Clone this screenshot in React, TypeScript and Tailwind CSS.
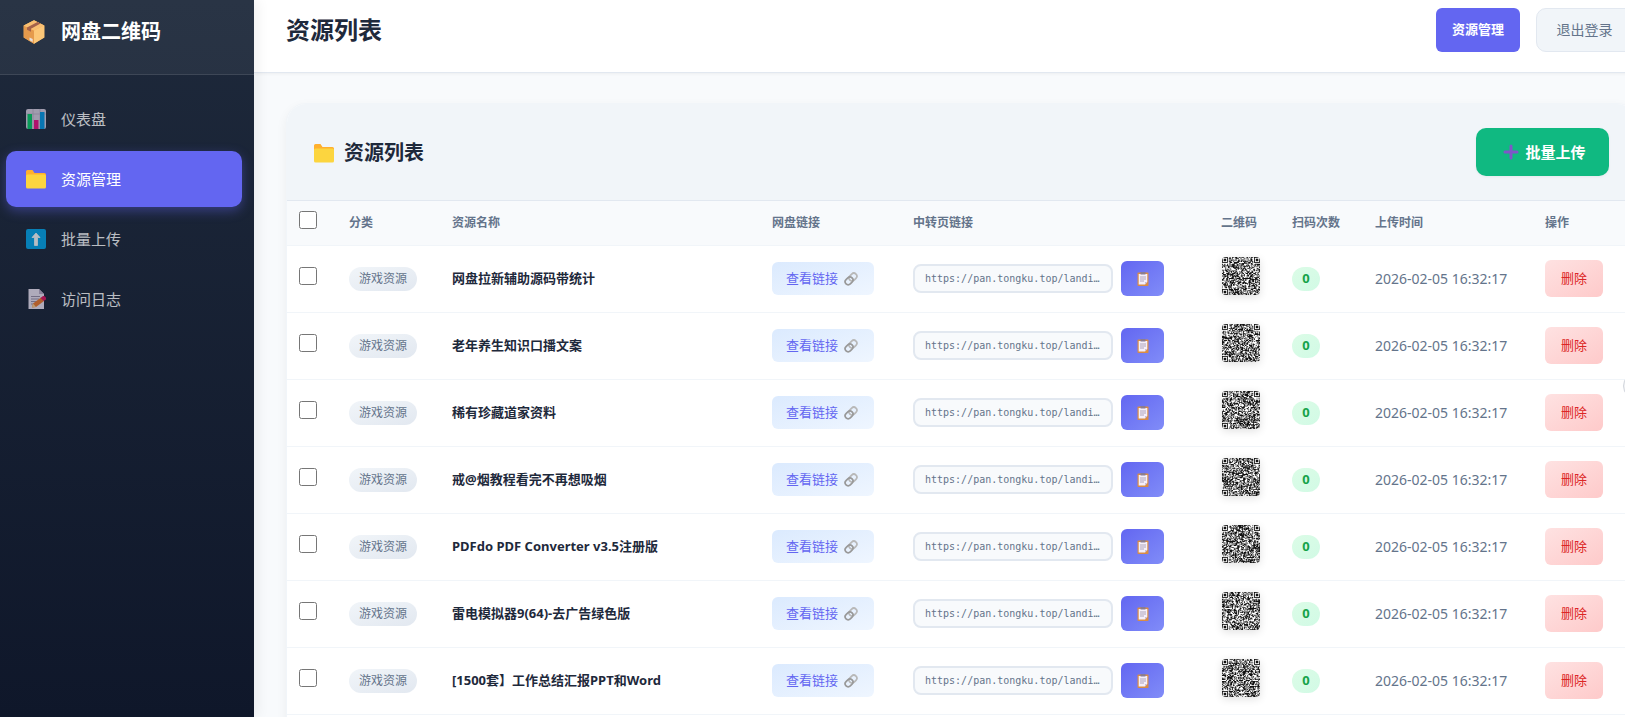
import type { ReactNode } from "react";

const navItems = [
  { label: "仪表盘", icon: <ChartIcon />, active: false },
  { label: "资源管理", icon: <FolderIcon />, active: true },
  { label: "批量上传", icon: <UploadIcon />, active: false },
  { label: "访问日志", icon: <MemoIcon />, active: false },
];

const resources = [
  "网盘拉新辅助源码带统计",
  "老年养生知识口播文案",
  "稀有珍藏道家资料",
  "戒@烟教程看完不再想吸烟",
  "PDFdo PDF Converter v3.5注册版",
  "雷电模拟器9(64)-去广告绿色版",
  "[1500套】工作总结汇报PPT和Word",
];

function BoxIcon() {
  return (
    <svg viewBox="0 0 22 24" className="w-[22px] h-6" aria-hidden="true">
      <path d="M11 0.3 21.300 5.500v12L11 23.700 0.700 17.500v-12z" fill="#f6b35c" />
      <path d="M0.700 5.500 11 10.500v13.200L0.700 17.500z" fill="#e59a4c" />
      <path d="M21.300 5.500 11 10.500v13.200l10.300-6.200z" fill="#fcc778" />
      <path d="M11 0.300 21.300 5.500 11 10.500 0.700 5.500z" fill="#f9bf72" />
      <path d="M14.500 2 17.500 3.500 8 8.800v3L4 9.800V7.500z" fill="#a5624a" />
      <path d="M6.500 17.500l3.200 1.500v3L6.500 20.300z" fill="#e8e0dc" />
    </svg>
  );
}

function ChartIcon() {
  return (
    <svg viewBox="0 0 20 20" className="size-5" aria-hidden="true">
      <rect width="20" height="20" rx="2" fill="#d9cfe0" />
      <path d="M0 5h20M7 0v20M14 0v20" stroke="#b8aac4" strokeWidth="0.8" />
      <rect x="1.500" y="5" width="4.500" height="15" fill="#00cc66" />
      <rect x="8" y="11" width="4.500" height="9" fill="#ee0c83" />
      <rect x="14" y="3" width="4.500" height="17" fill="#0099e6" />
    </svg>
  );
}

function FolderIcon() {
  return (
    <svg viewBox="0 0 20 20" className="size-5" aria-hidden="true">
      <path d="M0 2.500Q0 1 1.500 1H6.500l2 3h10Q20 4 20 5.500V10H0z" fill="#ffb02e" />
      <rect y="5.500" width="20" height="14" rx="1.500" fill="#fcd53f" />
    </svg>
  );
}

function UploadIcon() {
  return (
    <svg viewBox="0 0 20 20" className="size-5" aria-hidden="true">
      <rect width="20" height="20" rx="2" fill="#00a6ed" />
      <path
        d="M10 4 14 8.500H11.500V16.500h-3V8.500H6z"
        fill="#fff"
        stroke="#fff"
        strokeLinejoin="round"
        strokeWidth="0.8"
      />
    </svg>
  );
}

function MemoIcon() {
  return (
    <svg viewBox="0 0 20 20" className="size-5" aria-hidden="true">
      <path d="M2.500 0H13l5 5v15H2.500z" fill="#efe6f4" />
      <path d="M13 0v5h5z" fill="#b9abc6" />
      <path d="M5 7.500h9M5 10h8M5 12.500h6M5 15h3" stroke="#9b8fa8" strokeWidth="1" />
      <path d="M6 18.500 7 14.500 15 8.500l3 3.500-8 6z" fill="#f3792a" />
      <path d="M6 18.500 7 14.500l3 3.500z" fill="#ffcf8f" />
      <path d="M14.500 9 17 7q1.500-.5 2.500 1t.5 2.500L17.500 12z" fill="#e0115f" />
    </svg>
  );
}

function PlusIcon() {
  return (
    <svg viewBox="0 0 16 16" className="size-4" aria-hidden="true">
      <path d="M8 2v12M2 8h12" stroke="#7f56c8" strokeWidth="3" strokeLinecap="round" />
    </svg>
  );
}

function LinkIcon() {
  return (
    <svg viewBox="0 0 14 14" className="size-3.5" fill="none" aria-hidden="true">
      <g transform="rotate(-45 7 7)" strokeWidth="1.700">
        <rect x="5.500" y="4" width="8.500" height="6" rx="3" stroke="#b8b8b8" />
        <rect x="0" y="4" width="8.500" height="6" rx="3" stroke="#999" />
      </g>
    </svg>
  );
}

function ClipboardIcon() {
  return (
    <svg viewBox="0 0 12 14" className="w-3 h-3.5" aria-hidden="true">
      <rect x="0.500" y="0.500" width="11" height="13.500" rx="0.800" fill="#d98c45" />
      <path d="M1.700 2h8.600v8L8 12.500H1.700z" fill="#f5effa" />
      <path d="M10.300 10H8v2.500z" fill="#c9bcd6" />
      <rect x="3.500" y="0" width="5" height="2.500" rx="0.500" fill="#8a7d92" />
      <path d="M3 5h6M3 7h6M3 9h4" stroke="#a89cb5" strokeWidth="0.900" />
    </svg>
  );
}

const QR_SIZE = 45;

// Deterministic module pattern, one per row
function qrPath(seed: number) {
  let state = seed * 7919 + 17;
  let path = "";
  for (let y = 0; y < QR_SIZE; y++) {
    for (let x = 0; x < QR_SIZE; x++) {
      state = (state * 1103515245 + 12345) % 2147483648;
      const nearX = x < 8 || x > QR_SIZE - 9;
      const inFinder = (y < 8 && nearX) || (y > QR_SIZE - 9 && x < 8);
      if (!inFinder && state / 2147483648 > 0.46) {
        path += `M${x} ${y}h1v1h-1z`;
      }
    }
  }
  return path;
}

function QrCode({ seed }: { seed: number }) {
  const finders = [
    [0, 0],
    [QR_SIZE - 7, 0],
    [0, QR_SIZE - 7],
  ];
  return (
    <svg
      viewBox={`0 0 ${QR_SIZE} ${QR_SIZE}`}
      className="size-[38px] rounded bg-white shadow-[0_2px_8px_rgba(0,0,0,0.12)]"
      role="img"
      aria-label="二维码"
    >
      <path d={qrPath(seed)} fill="#111" />
      {finders.map(([x, y]) => (
        <g key={`${x}-${y}`}>
          <rect x={x + 0.5} y={y + 0.5} width="6" height="6" fill="none" stroke="#111" />
          <rect x={x + 2} y={y + 2} width="3" height="3" fill="#111" />
        </g>
      ))}
    </svg>
  );
}

function Th({ children }: { children: ReactNode }) {
  return (
    <th scope="col" className="px-4 text-left text-xs font-bold text-[#64748b]">
      {children}
    </th>
  );
}

const Sidebar = () => (
  <aside className="relative z-10 w-[254px] shrink-0 bg-linear-to-b from-[#1e293b] to-[#0f172a] shadow-[4px_0_12px_rgba(0,0,0,0.06)]">
    <div className="flex items-center gap-4 border-b border-white/10 bg-white/5 px-[23px] pt-[17px] pb-[27px]">
      <BoxIcon />
      <h2 className="text-xl leading-[30px] font-bold text-white">网盘二维码</h2>
    </div>
    <nav className="flex flex-col gap-1 pt-4 pr-3 pl-1.5">
      {navItems.map((item) => (
        <a
          key={item.label}
          href="#"
          className={
            item.active
              ? "flex h-14 items-center gap-[15px] rounded-[10px] bg-[#6366f1] px-5 text-[15px] text-white shadow-[0_4px_12px_rgba(99,102,241,0.4)]"
              : "flex h-14 items-center gap-[15px] rounded-[10px] px-5 text-[15px] text-white opacity-70"
          }
        >
          {item.icon}
          {item.label}
        </a>
      ))}
    </nav>
  </aside>
);

const ResourceRow = ({ name, index }: { name: string; index: number }) => (
  <tr className="h-[67px] border-b border-[#f1f5f9]">
    <td className="pl-3">
      <input type="checkbox" aria-label={name} className="mb-1.5 block size-[18px]" />
    </td>
    <td className="px-4">
      <span className="flex h-6 w-[68px] items-center justify-center rounded-full bg-linear-to-br from-[#f1f5f9] to-[#e2e8f0] text-xs text-[#64748b]">
        游戏资源
      </span>
    </td>
    <td className="px-4 text-[13px] font-bold whitespace-nowrap text-[#1e293b]">{name}</td>
    <td className="px-4">
      <a
        href="#"
        className="flex h-[33px] w-[102px] items-center gap-1.5 rounded-md bg-linear-to-br from-[#dbeafe] to-[#eff6ff] px-3.5 text-[13px] whitespace-nowrap text-[#6366f1]"
      >
        查看链接
        <LinkIcon />
      </a>
    </td>
    <td className="px-4">
      <div className="flex items-center gap-2">
        <input
          type="text"
          readOnly
          aria-label="中转页链接"
          value="https://pan.tongku.top/landi…"
          className="h-[29px] w-[200px] rounded-lg border-2 border-[#e2e8f0] bg-[#f8fafc] px-2.5 font-['DejaVu_Sans_Mono',monospace] text-[10px] text-[#64748b]"
        />
        <button
          type="button"
          aria-label="复制链接"
          className="flex h-[35px] w-[43px] items-center justify-center rounded-md bg-linear-to-br from-[#6366f1] to-[#818cf8]"
        >
          <ClipboardIcon />
        </button>
      </div>
    </td>
    <td className="px-4">
      <div className="mb-1.5 ml-px">
        <QrCode seed={index + 1} />
      </div>
    </td>
    <td className="px-4">
      <span className="flex h-6 w-7 items-center justify-center rounded-full bg-linear-to-br from-[#dcfce7] to-[#d1fae5] text-[13px] font-bold text-[#16a34a]">
        0
      </span>
    </td>
    <td className="px-4 text-sm whitespace-nowrap text-[#64748b]">2026-02-05 16:32:17</td>
    <td className="px-4">
      <button
        type="button"
        className="h-[37px] rounded-md bg-linear-to-br from-[#fee2e2] to-[#fecaca] px-4 text-[13px] text-[#dc2626]"
      >
        删除
      </button>
    </td>
  </tr>
);

const App = () => {
  return (
    <div className="relative flex h-screen overflow-hidden bg-[#f8fafc] font-['Noto_Sans','Noto_Sans_CJK_SC',sans-serif]">
      <Sidebar />

      <main className="min-w-[1415px] flex-1">
        <header className="flex items-center justify-between border-b border-[#e2e8f0] bg-white px-8 pt-2 pb-5 shadow-[0_1px_3px_rgba(0,0,0,0.05)]">
          <h1 className="text-2xl font-bold text-[#1e293b]">资源列表</h1>
          <div className="flex gap-4">
            <button type="button" className="h-11 rounded-md bg-[#6366f1] px-4 text-[13px] font-bold text-white">
              资源管理
            </button>
            <button
              type="button"
              className="h-11 w-[101px] rounded-[10px] border border-[#e2e8f0] bg-[#f1f5f9] pr-1 text-sm text-[#64748b]"
            >
              退出登录
            </button>
          </div>
        </header>

        <section className="mx-8 mt-[30px] overflow-hidden rounded-[20px] border border-[#f1f5f9] bg-white pb-8 shadow-[0_4px_12px_rgba(0,0,0,0.05)]">
          <div className="flex items-center justify-between border-b border-[#e2e8f0] bg-[#f1f5f9] px-[27px] py-6">
            <h2 className="flex items-center gap-2.5 pt-0.5 text-xl font-bold text-[#1e293b]">
              <FolderIcon />
              资源列表
            </h2>
            <button
              type="button"
              className="flex h-12 w-[133px] items-center justify-center gap-1.5 rounded-[10px] bg-[#10b981] pl-1 text-[15px] font-bold text-white shadow-[0_1px_3px_rgba(0,0,0,0.05)]"
            >
              <PlusIcon />
              批量上传
            </button>
          </div>

          <table className="w-full table-fixed border-collapse">
            <colgroup>
              <col className="w-[46px]" />
              <col className="w-[103px]" />
              <col className="w-[320px]" />
              <col className="w-[141px]" />
              <col className="w-[308px]" />
              <col className="w-[71px]" />
              <col className="w-[83px]" />
              <col className="w-[170px]" />
              <col />
            </colgroup>
            <thead>
              <tr className="h-11 border-b border-[#f1f5f9] bg-[#f8fafc]">
                <th className="pl-3">
                  <input type="checkbox" aria-label="全选" className="mb-1.5 block size-[18px]" />
                </th>
                <Th>分类</Th>
                <Th>资源名称</Th>
                <Th>网盘链接</Th>
                <Th>中转页链接</Th>
                <Th>二维码</Th>
                <Th>扫码次数</Th>
                <Th>上传时间</Th>
                <Th>操作</Th>
              </tr>
            </thead>
            <tbody>
              {resources.map((name, index) => (
                <ResourceRow key={name} name={name} index={index} />
              ))}
            </tbody>
          </table>
        </section>
      </main>

      {/* Floating handle, tucked behind the right edge */}
      <button
        type="button"
        aria-label="展开"
        className="absolute top-[372px] -right-[26px] size-7 rounded-full border border-gray-300 bg-gray-100"
      />
    </div>
  );
};

export default App;
